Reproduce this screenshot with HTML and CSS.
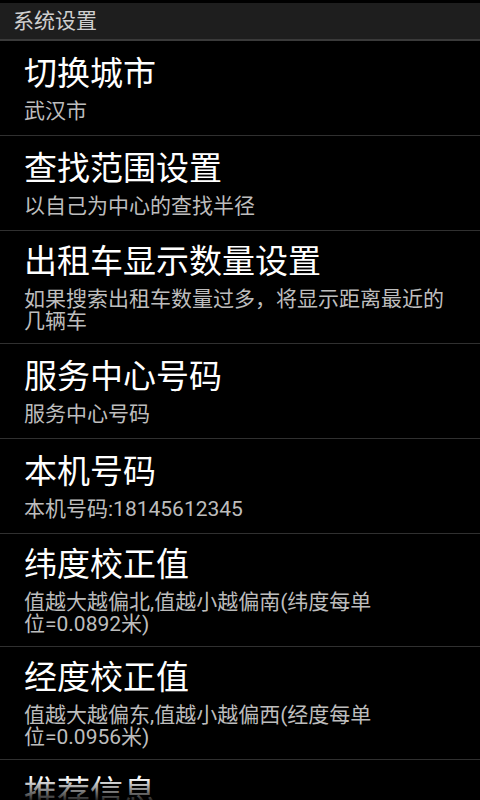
FILE: index.html
```html
<!DOCTYPE html>
<html lang="zh-CN">
<head>
<meta charset="utf-8">
<title>系统设置</title>
<link rel="stylesheet" href="styles.css">
</head>
<body>
<div class="screen">
  <div class="titlebar">系统设置</div>
  <ul class="prefs">
    <li class="pref">
      <div class="pref-title">切换城市</div>
      <div class="pref-summary">武汉市</div>
    </li>
    <li class="pref">
      <div class="pref-title">查找范围设置</div>
      <div class="pref-summary">以自己为中心的查找半径</div>
    </li>
    <li class="pref">
      <div class="pref-title">出租车显示数量设置</div>
      <div class="pref-summary">如果搜索出租车数量过多，将显示距离最近的几辆车</div>
    </li>
    <li class="pref">
      <div class="pref-title">服务中心号码</div>
      <div class="pref-summary">服务中心号码</div>
    </li>
    <li class="pref">
      <div class="pref-title">本机号码</div>
      <div class="pref-summary">本机号码:18145612345</div>
    </li>
    <li class="pref">
      <div class="pref-title">纬度校正值</div>
      <div class="pref-summary">值越大越偏北,值越小越偏南(纬度每单<br>位=0.0892米)</div>
    </li>
    <li class="pref">
      <div class="pref-title">经度校正值</div>
      <div class="pref-summary">值越大越偏东,值越小越偏西(经度每单<br>位=0.0956米)</div>
    </li>
    <li class="pref">
      <div class="pref-title">推荐信息</div>
      <div class="pref-summary">推荐给好友</div>
    </li>
  </ul>
  <div class="fade"></div>
</div>
</body>
</html>
```

FILE: styles.css
```css
html, body {
  margin: 0;
  padding: 0;
  background: #000;
  height: 100%;
  overflow: hidden;
}
body {
  font-family: Roboto, "Noto Sans CJK SC", sans-serif;
  color: #fff;
}
.screen {
  position: relative;
  width: 480px;
  height: 800px;
  overflow: hidden;
  padding-top: 3px;
  box-sizing: border-box;
}
.titlebar {
  height: 38px;
  box-sizing: border-box;
  padding: 2px 0 0 13px;
  background: #1e1e1e;
  border-bottom: 2px solid #3a3a3a;
  font-size: 21px;
  line-height: 33px;
  color: #cfcfcf;
}
.prefs {
  list-style: none;
  margin: 0;
  padding: 0;
}
.pref {
  min-height: 95px;
  box-sizing: border-box;
  padding: 11px 24px;
  border-bottom: 1px solid #303030;
  display: flex;
  flex-direction: column;
  justify-content: center;
}
.pref-title {
  font-size: 33px;
  line-height: 40px;
  color: #fff;
  white-space: nowrap;
}
.pref-summary {
  margin-top: 6px;
  font-size: 21px;
  line-height: 22px;
  color: #bdbdbd;
}
.fade {
  position: absolute;
  left: 0;
  right: 0;
  bottom: 0;
  height: 22px;
  background: linear-gradient(to bottom, rgba(0,0,0,0), rgba(0,0,0,0.85));
}
```
